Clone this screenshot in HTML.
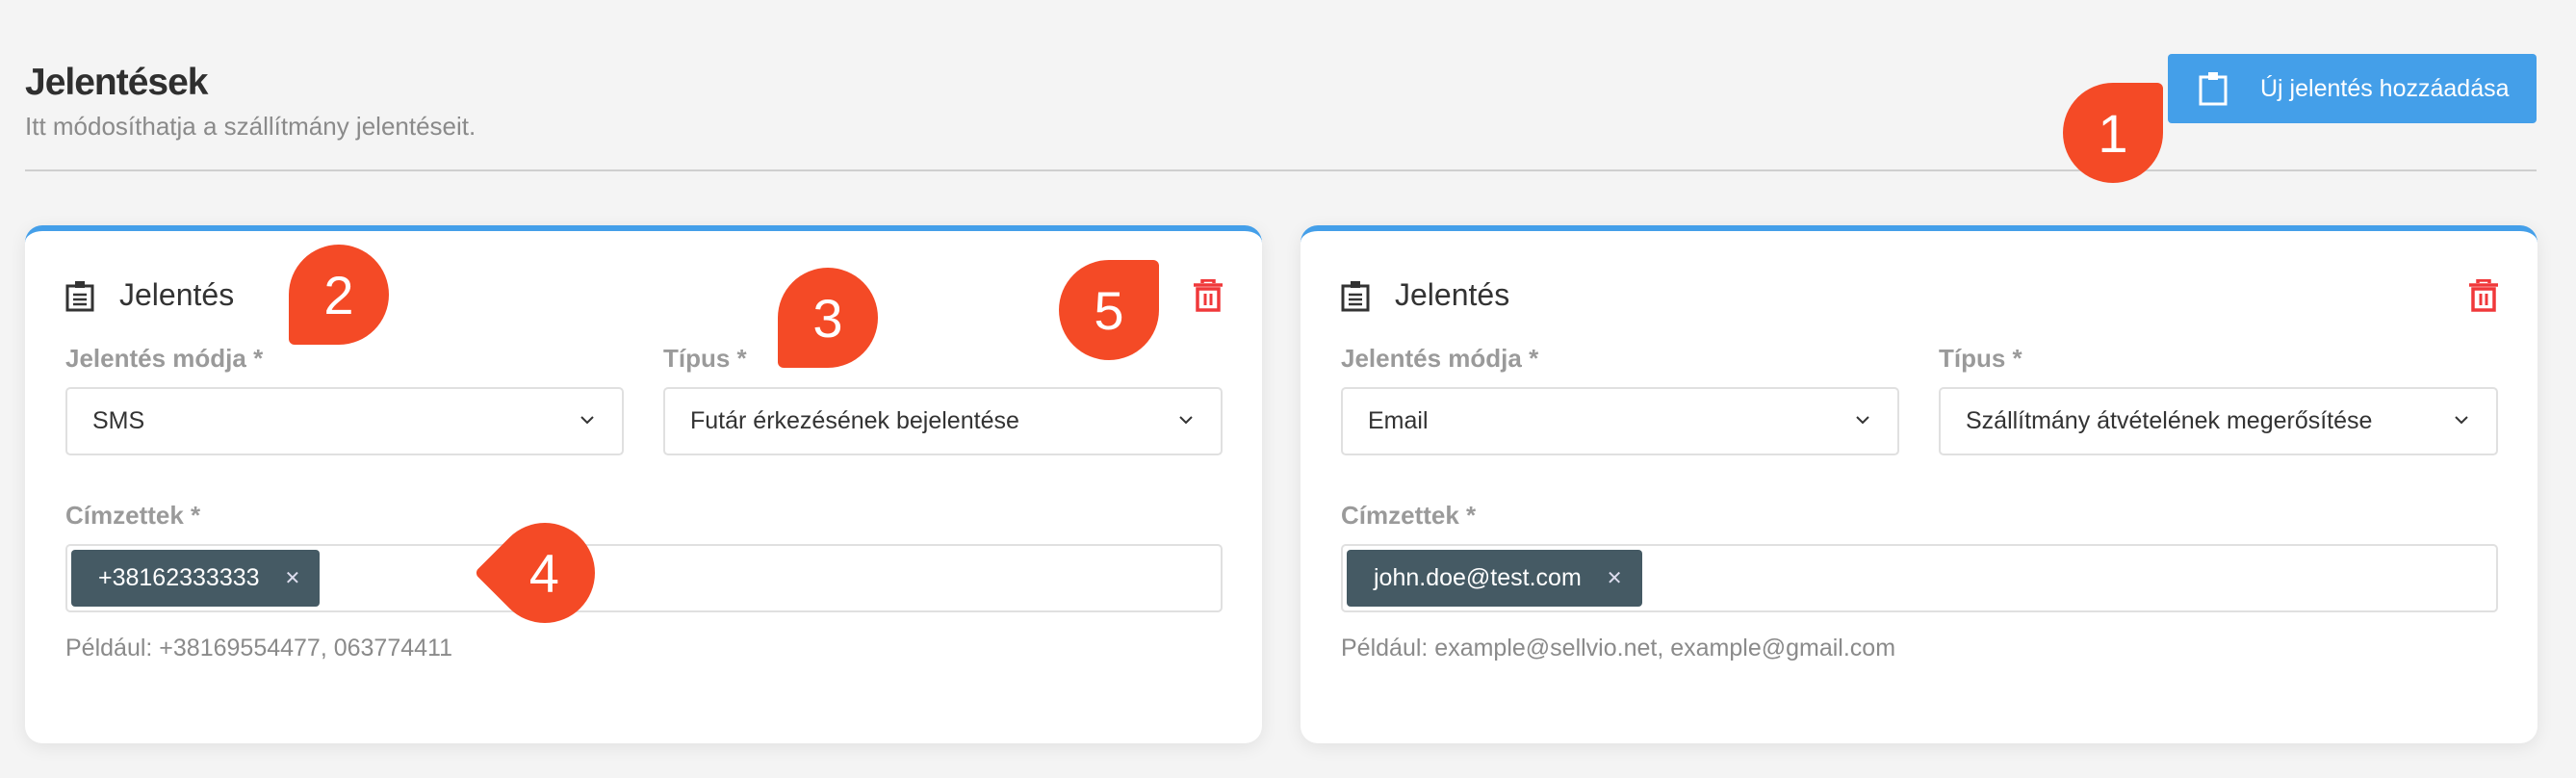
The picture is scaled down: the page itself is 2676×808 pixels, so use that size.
<!DOCTYPE html>
<html><head><meta charset="utf-8"><style>
*{margin:0;padding:0;box-sizing:border-box}
body{width:2676px;height:808px;background:#f4f4f4;font-family:"Liberation Sans",sans-serif;position:relative;overflow:hidden}
.a{position:absolute}
.title{left:26px;top:64px;font-size:39px;font-weight:bold;color:#2f2f2f;letter-spacing:-1px}
.sub{left:26px;top:116px;font-size:26px;color:#8a8a8a}
.div{left:26px;top:176px;width:2609px;height:2px;background:#cfcfcf}
.btn{left:2252px;top:56px;width:383px;height:72px;background:#449fe9;border-radius:4px;color:#fff;font-size:25px;display:flex;align-items:center}
.card{top:234px;width:1285px;height:538px;background:#fff;border-radius:18px;border-top:6px solid #449fe9;box-shadow:0 4px 18px rgba(0,0,0,.08)}
.hdr{font-size:32px;color:#333;top:48px;left:98px}
.lbl{font-size:26px;font-weight:bold;color:#9a9a9a}
.sel{height:71px;border:2px solid #e0e0e0;border-radius:5px;font-size:25px;color:#333;display:flex;align-items:center;padding-left:26px}
.chev{position:absolute;right:28px;top:26px}
.tags{left:42px;top:325px;width:1202px;height:71px;border:2px solid #e0e0e0;border-radius:5px}
.tag{left:4px;top:4px;height:59px;background:#455a64;border-radius:4px;color:#fff;font-size:25px;display:flex;align-items:center;padding:0 20px 0 28px}
.tag span{font-size:20px;margin-left:26px;color:#dde}
.hint{left:42px;top:419px;font-size:25px;color:#8a8a8a}
.drop{width:104px;height:104px;background:#f44a26;border-radius:50%;color:#fff;font-size:56px;display:flex;align-items:center;justify-content:center}
</style></head><body>
<div class="a title">Jelentések</div>
<div class="a sub">Itt módosíthatja a szállítmány jelentéseit.</div>
<div class="a div"></div>
<div class="a btn"><svg width="30" height="36" viewBox="0 0 30 36" style="margin-left:32px;margin-right:34px"><rect x="2" y="6" width="26" height="28" fill="none" stroke="#fff" stroke-width="3"/><rect x="10" y="1" width="10" height="8" fill="#fff"/></svg>Új jelentés hozzáadása</div>

<!-- card 1 -->
<div class="a card" style="left:26px">
 <svg class="a" style="left:42px;top:52px" width="30" height="32" viewBox="0 0 30 32"><rect x="2" y="5" width="26" height="25" fill="none" stroke="#333" stroke-width="3"/><rect x="10" y="0" width="10" height="7" fill="#333"/><path d="M8 14h14M8 19h14M8 24h14" stroke="#333" stroke-width="2.5"/></svg>
 <div class="a hdr">Jelentés</div>
 <svg class="a" style="left:1213px;top:50px" width="32" height="34" viewBox="0 0 32 34"><path d="M10 4V1h12v3M1 6h30" stroke="#f0383a" stroke-width="3.5" fill="none"/><rect x="5" y="10" width="22" height="22" fill="none" stroke="#f0383a" stroke-width="3.5"/><path d="M13 15v12M19 15v12" stroke="#f0383a" stroke-width="3"/></svg>
 <div class="a lbl" style="left:42px;top:117px">Jelentés módja *</div>
 <div class="a lbl" style="left:663px;top:117px">Típus *</div>
 <div class="a sel" style="left:42px;top:162px;width:580px">SMS<svg class="chev" width="16" height="12" viewBox="0 0 16 12"><path d="M2 3l6 6 6-6" stroke="#333" stroke-width="2" fill="none"/></svg></div>
 <div class="a sel" style="left:663px;top:162px;width:581px">Futár érkezésének bejelentése<svg class="chev" width="16" height="12" viewBox="0 0 16 12"><path d="M2 3l6 6 6-6" stroke="#333" stroke-width="2" fill="none"/></svg></div>
 <div class="a lbl" style="left:42px;top:280px">Címzettek *</div>
 <div class="a tags"><div class="a tag">+38162333333<span>✕</span></div></div>
 <div class="a hint">Például: +38169554477, 063774411</div>
</div>

<!-- card 2 -->
<div class="a card" style="left:1351px">
 <svg class="a" style="left:42px;top:52px" width="30" height="32" viewBox="0 0 30 32"><rect x="2" y="5" width="26" height="25" fill="none" stroke="#333" stroke-width="3"/><rect x="10" y="0" width="10" height="7" fill="#333"/><path d="M8 14h14M8 19h14M8 24h14" stroke="#333" stroke-width="2.5"/></svg>
 <div class="a hdr">Jelentés</div>
 <svg class="a" style="left:1213px;top:50px" width="32" height="34" viewBox="0 0 32 34"><path d="M10 4V1h12v3M1 6h30" stroke="#f0383a" stroke-width="3.5" fill="none"/><rect x="5" y="10" width="22" height="22" fill="none" stroke="#f0383a" stroke-width="3.5"/><path d="M13 15v12M19 15v12" stroke="#f0383a" stroke-width="3"/></svg>
 <div class="a lbl" style="left:42px;top:117px">Jelentés módja *</div>
 <div class="a lbl" style="left:663px;top:117px">Típus *</div>
 <div class="a sel" style="left:42px;top:162px;width:580px">Email<svg class="chev" width="16" height="12" viewBox="0 0 16 12"><path d="M2 3l6 6 6-6" stroke="#333" stroke-width="2" fill="none"/></svg></div>
 <div class="a sel" style="left:663px;top:162px;width:581px">Szállítmány átvételének megerősítése<svg class="chev" width="16" height="12" viewBox="0 0 16 12"><path d="M2 3l6 6 6-6" stroke="#333" stroke-width="2" fill="none"/></svg></div>
 <div class="a lbl" style="left:42px;top:280px">Címzettek *</div>
 <div class="a tags"><div class="a tag">john.doe@test.com<span>✕</span></div></div>
 <div class="a hint">Például: example@sellvio.net, example@gmail.com</div>
</div>

<!-- callouts -->
<div class="a drop" style="left:2143px;top:86px;border-radius:50% 6px 50% 50%">1</div>
<div class="a drop" style="left:300px;top:254px;border-radius:50% 50% 50% 6px">2</div>
<div class="a drop" style="left:808px;top:278px;border-radius:50% 50% 50% 6px">3</div>
<div class="a drop" style="left:1100px;top:270px;border-radius:50% 6px 50% 50%">5</div>
<div class="a" style="left:514px;top:543px;width:104px;height:104px;transform:rotate(45deg);border-radius:50% 50% 50% 6px;background:#f44a26;color:#fff;font-size:56px;display:flex;align-items:center;justify-content:center"><span style="transform:rotate(-45deg)">4</span></div>
</body></html>
